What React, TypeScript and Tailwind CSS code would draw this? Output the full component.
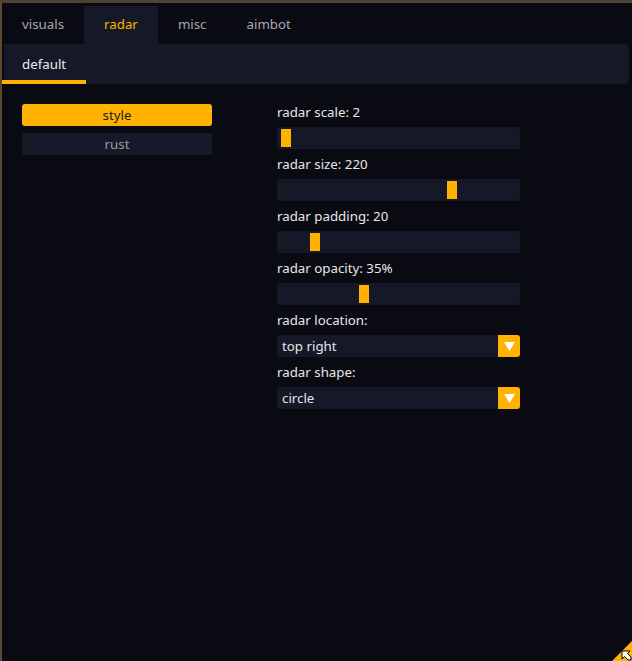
import type { ReactNode } from "react";

const TABS = ["visuals", "radar", "misc", "aimbot"];

const SLIDERS = [
  { label: "radar scale: 2", knob: "left-[4px]" },
  { label: "radar size: 220", knob: "left-[170px]" },
  { label: "radar padding: 20", knob: "left-[33px]" },
  { label: "radar opacity: 35%", knob: "left-[82px]" },
];

const COMBOS = [
  { label: "radar location:", value: "top right" },
  { label: "radar shape:", value: "circle" },
];

function Row({ label, children }: { label: string; children: ReactNode }) {
  return (
    <div className="flex flex-col gap-[4px]">
      <div className="flex h-[22px] items-center pt-px text-[#e6e6ea]">{label}</div>
      {children}
    </div>
  );
}

function Slider({ knob }: { knob: string }) {
  return (
    <div className="relative h-[22px] rounded-[3px] bg-[#151826]">
      <div className={`absolute top-[2px] h-[18px] w-[10px] bg-[#ffb300] ${knob}`} />
    </div>
  );
}

function Combo({ value }: { value: string }) {
  return (
    <div className="flex h-[22px] items-center rounded-[3px] bg-[#151826]">
      <span className="flex-1 pl-[5px] pt-px text-[#e6e6ea]">{value}</span>
      <div className="flex h-[22px] w-[22px] items-center justify-center rounded-r-[3px] bg-[#ffb300]">
        <svg width="11" height="9" viewBox="0 0 11 9">
          <polygon points="0,0 11,0 5.5,9" fill="#ffffff" />
        </svg>
      </div>
    </div>
  );
}

export default function App() {
  return (
    <div
      className="relative h-[661px] w-[632px] overflow-hidden border-l-[2px] border-t-[3px] border-l-[#5a4b2e] border-t-[#4d4335] bg-[#0a0b12] text-[13.3px] leading-none"
      style={{ fontFamily: '"Noto Sans", sans-serif' }}
    >
      {/* main tabs */}
      <div className="flex h-[41px] items-end">
        {TABS.map((t) => (
          <div
            key={t}
            className={
              t === "radar"
                ? "flex h-[38px] items-center bg-[#151826] px-5 text-[#ffb300]"
                : "flex h-[38px] items-center px-5 text-[#a6a7ae]"
            }
          >
            {t}
          </div>
        ))}
      </div>

      {/* sub tabs */}
      <div className="mr-[3px] ml-[2px] flex h-[40px] rounded-b-[3px] rounded-tr-[3px] bg-[#151826]">
        <div className="-ml-[2px] flex h-[40px] items-center border-b-[4px] border-[#ffb300] px-5 pt-[5px] text-[#ececf0]">
          default
        </div>
      </div>

      {/* body */}
      <div className="flex pt-[17px]">
        <div className="ml-[20px] mt-[3px] flex w-[190px] flex-col gap-[7px]">
          <div className="flex h-[22px] items-center justify-center rounded-[3px] bg-[#ffb300] pt-px text-[#1b1b1f]">
            style
          </div>
          <div className="flex h-[22px] items-center justify-center rounded-[3px] bg-[#161927] pt-px text-[#9c9da5]">
            rust
          </div>
        </div>

        <div className="ml-[65px] flex w-[243px] flex-col gap-[4px]">
          {SLIDERS.map((s) => (
            <Row key={s.label} label={s.label}>
              <Slider knob={s.knob} />
            </Row>
          ))}
          {COMBOS.map((c) => (
            <Row key={c.label} label={c.label}>
              <Combo value={c.value} />
            </Row>
          ))}
        </div>
      </div>

      {/* resize grip */}
      <svg className="absolute bottom-0 right-0" width="20" height="20" viewBox="0 0 20 20">
        <polygon points="0,20 20,0 20,20" fill="#ffb300" />
        <path
          d="M10 10 L18 10 L15.5 12.5 L19 16 L19 19 L16 19 L12.5 15.5 L10 18 Z"
          fill="#ffffff"
          stroke="#000000"
          strokeWidth="1"
        />
      </svg>
    </div>
  );
}
